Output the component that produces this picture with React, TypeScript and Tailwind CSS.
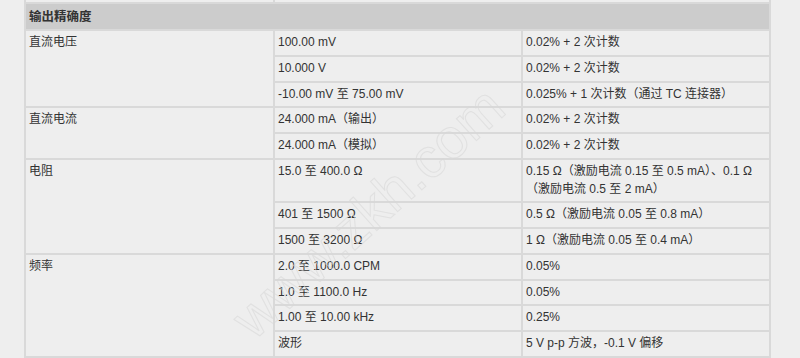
import React from "react";

type Row = { a?: { text: string; rowSpan: number }; b: string; c: React.ReactNode };

const rows: Row[] = [
  { a: { text: "直流电压", rowSpan: 3 }, b: "100.00 mV", c: "0.02% + 2 次计数" },
  { b: "10.000 V", c: "0.02% + 2 次计数" },
  { b: "-10.00 mV 至 75.00 mV", c: "0.025% + 1 次计数（通过 TC 连接器）" },
  { a: { text: "直流电流", rowSpan: 2 }, b: "24.000 mA（输出）", c: "0.02% + 2 次计数" },
  { b: "24.000 mA（模拟）", c: "0.02% + 2 次计数" },
  {
    a: { text: "电阻", rowSpan: 3 },
    b: "15.0 至 400.0 Ω",
    c: "0.15 Ω（激励电流 0.15 至 0.5 mA）、0.1 Ω（激励电流 0.5 至 2 mA）",
  },
  { b: "401 至 1500 Ω", c: "0.5 Ω（激励电流 0.05 至 0.8 mA）" },
  { b: "1500 至 3200 Ω", c: "1 Ω（激励电流 0.05 至 0.4 mA）" },
  { a: { text: "频率", rowSpan: 4 }, b: "2.0 至 1000.0 CPM", c: "0.05%" },
  { b: "1.0 至 1100.0 Hz", c: "0.05%" },
  { b: "1.00 至 10.00 kHz", c: "0.25%" },
  { b: "波形", c: "5 V p-p 方波，-0.1 V 偏移" },
];

const cell =
  "bg-[#eeeeee] align-top text-left px-[3px] py-[3px] leading-[17.75px] text-[12px] text-[#333333]";

export default function App() {
  return (
    <div
      className="w-[800px] h-[358px] overflow-hidden bg-[#eeeeee] relative"
      style={{ fontFamily: '"Liberation Sans", Arial, "Noto Sans CJK SC", sans-serif' }}
    >
      <table className="ml-[24px] -mt-[24px] w-[747px] table-fixed border-separate border-spacing-[2px] bg-[#d9d9d9]">
        <colgroup>
          <col className="w-[247px]" />
          <col className="w-[246px]" />
          <col className="w-[246px]" />
        </colgroup>
        <tbody>
          <tr>
            <td className={cell + " h-[24px]"}>&nbsp;</td>
            <td className={cell + " h-[24px]"} colSpan={2}>&nbsp;</td>
          </tr>
          <tr>
            <td
              colSpan={3}
              className="bg-[#cccccc] text-left px-[3px] pt-[4px] pb-[3px] leading-[18px] text-[12.5px] font-bold text-[#333333]"
            >
              输出精确度
            </td>
          </tr>
          {rows.map((r, i) => (
            <tr key={i}>
              {r.a && (
                <td rowSpan={r.a.rowSpan} className={cell}>
                  {r.a.text}
                </td>
              )}
              <td className={cell}>{r.b}</td>
              <td className={cell}>{r.c}</td>
            </tr>
          ))}
        </tbody>
      </table>
      <div className="absolute left-[200px] top-[188px] w-[320px] text-center -rotate-[42deg] text-[56px] leading-[64px] text-transparent [-webkit-text-stroke:1px_#d8d8d8] opacity-60 pointer-events-none select-none">
        www.zkh.com
      </div>
    </div>
  );
}
